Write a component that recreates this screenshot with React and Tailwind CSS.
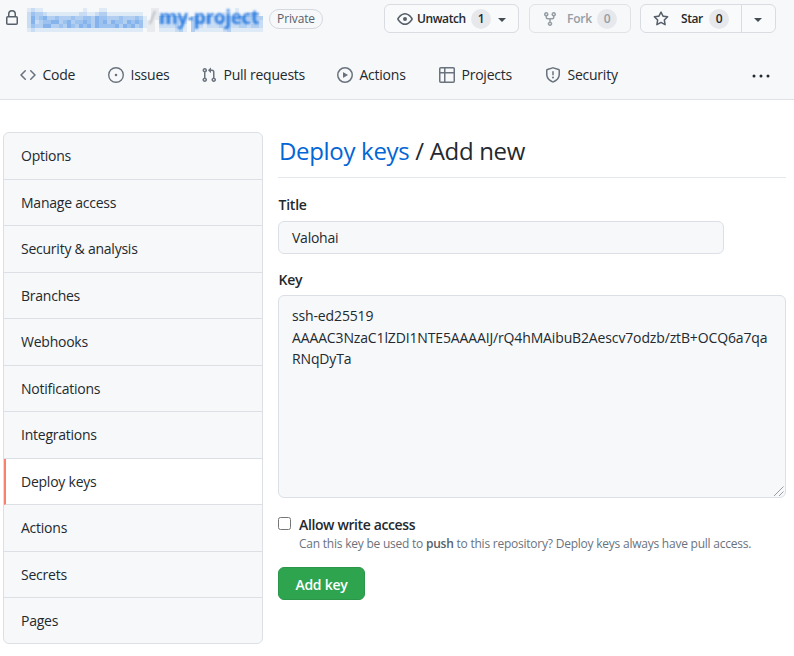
import React from "react";

const ICONS = {
  lock: "M4 4v2h-.25A1.75 1.75 0 002 7.75v5.5c0 .966.784 1.75 1.75 1.75h8.5A1.75 1.75 0 0014 13.25v-5.5A1.75 1.75 0 0012.25 6H12V4a4 4 0 10-8 0zm6.5 2V4a2.5 2.5 0 10-5 0v2h5zM12 7.5h.25a.25.25 0 01.25.25v5.5a.25.25 0 01-.25.25h-8.5a.25.25 0 01-.25-.25v-5.5a.25.25 0 01.25-.25H12z",
  code: "M4.72 3.22a.75.75 0 011.06 1.06L2.06 8l3.72 3.72a.75.75 0 11-1.06 1.06L.47 8.53a.75.75 0 010-1.06l4.25-4.25zm6.56 0a.75.75 0 10-1.06 1.06L13.94 8l-3.72 3.72a.75.75 0 101.06 1.06l4.25-4.25a.75.75 0 000-1.06l-4.25-4.25z",
  issue: "M8 9.3a1.3 1.3 0 100-2.6 1.3 1.3 0 000 2.6zM8 0a8 8 0 100 16A8 8 0 008 0zM1.4 8a6.6 6.6 0 1113.2 0 6.6 6.6 0 01-13.2 0z",
  pull: "M7.177 3.073L9.573.677A.25.25 0 0110 .854v4.792a.25.25 0 01-.427.177L7.177 3.427a.25.25 0 010-.354zM3.75 2.5a.75.75 0 100 1.5.75.75 0 000-1.5zm-2.25.75a2.25 2.25 0 113 2.122v5.256a2.251 2.251 0 11-1.5 0V5.372A2.25 2.25 0 011.5 3.25zM11 2.5h-1V4h1a1 1 0 011 1v5.628a2.251 2.251 0 101.5 0V5A2.5 2.5 0 0011 2.5zm1 10.25a.75.75 0 111.5 0 .75.75 0 01-1.5 0zM3.75 12a.75.75 0 100 1.5.75.75 0 000-1.5z",
  play: "M1.5 8a6.5 6.5 0 1113 0 6.5 6.5 0 01-13 0zM8 0a8 8 0 100 16A8 8 0 008 0zM6.379 5.227A.25.25 0 006 5.442v5.117a.25.25 0 00.379.214l4.264-2.559a.25.25 0 000-.428L6.379 5.227z",
  table: "M0 1.75C0 .784.784 0 1.75 0h12.5C15.216 0 16 .784 16 1.75v12.5A1.75 1.75 0 0114.25 16H1.75A1.75 1.75 0 010 14.25V1.75zM1.5 6.5v7.75c0 .138.112.25.25.25H5v-8H1.5zM6.5 6.5v8h7.75a.25.25 0 00.25-.25V6.5h-8zM14.5 5V1.75a.25.25 0 00-.25-.25H6.5V5h8zm-9.5 0V1.5H1.75a.25.25 0 00-.25.25V5H5z",
  shield: "M7.467.133a1.75 1.75 0 011.066 0l5.25 1.68A1.75 1.75 0 0115 3.48V7c0 1.566-.32 3.182-1.303 4.682-.983 1.498-2.585 2.813-5.032 3.855a1.7 1.7 0 01-1.33 0c-2.447-1.042-4.049-2.357-5.032-3.855C1.32 10.182 1 8.566 1 7V3.48a1.75 1.75 0 011.217-1.667l5.25-1.68zm.61 1.429a.25.25 0 00-.153 0l-5.25 1.68a.25.25 0 00-.174.238V7c0 1.358.275 2.666 1.057 3.86.784 1.194 2.121 2.34 4.366 3.297a.2.2 0 00.154 0c2.245-.956 3.582-2.104 4.366-3.298C13.225 9.666 13.5 8.36 13.5 7V3.48a.25.25 0 00-.174-.237l-5.25-1.68zM9 10.5a1 1 0 11-2 0 1 1 0 012 0zm-.25-5.75a.75.75 0 10-1.5 0v3a.75.75 0 001.5 0v-3z",
  eye: "M1.679 7.932c.412-.621 1.242-1.75 2.366-2.717C5.175 4.242 6.527 3.5 8 3.5c1.473 0 2.824.742 3.955 1.715 1.124.967 1.954 2.096 2.366 2.717a.119.119 0 010 .136c-.412.621-1.242 1.75-2.366 2.717C10.825 11.758 9.473 12.5 8 12.5c-1.473 0-2.824-.742-3.955-1.715C2.92 9.818 2.09 8.69 1.679 8.068a.119.119 0 010-.136zM8 2c-1.981 0-3.67.992-4.933 2.078C1.797 5.169.88 6.423.43 7.1a1.619 1.619 0 000 1.798c.45.678 1.367 1.932 2.637 3.024C4.329 13.008 6.019 14 8 14c1.981 0 3.67-.992 4.933-2.078 1.27-1.091 2.187-2.345 2.637-3.023a1.619 1.619 0 000-1.798c-.45-.678-1.367-1.932-2.637-3.023C11.671 2.992 9.981 2 8 2zm0 8a2 2 0 100-4 2 2 0 000 4z",
  fork: "M5 3.25a.75.75 0 11-1.5 0 .75.75 0 011.5 0zm0 2.122a2.25 2.25 0 10-1.5 0v.878A2.25 2.25 0 005.75 8.5h1.5v2.128a2.251 2.251 0 101.5 0V8.5h1.5a2.25 2.25 0 002.25-2.25v-.878a2.25 2.25 0 10-1.5 0v.878a.75.75 0 01-.75.75h-4.5A.75.75 0 015 6.25v-.878zm3.75 7.378a.75.75 0 11-1.5 0 .75.75 0 011.5 0zm3-8.75a.75.75 0 100-1.5.75.75 0 000 1.5z",
  star: "M8 .25a.75.75 0 01.673.418l1.882 3.815 4.21.612a.75.75 0 01.416 1.279l-3.046 2.97.719 4.192a.75.75 0 01-1.088.791L8 12.347l-3.766 1.98a.75.75 0 01-1.088-.79l.72-4.194L.818 6.374a.75.75 0 01.416-1.28l4.21-.611L7.327.668A.75.75 0 018 .25zm0 2.445L6.615 5.5a.75.75 0 01-.564.41l-3.097.45 2.24 2.184a.75.75 0 01.216.664l-.528 3.084 2.769-1.456a.75.75 0 01.698 0l2.77 1.456-.53-3.084a.75.75 0 01.216-.664l2.24-2.183-3.096-.45a.75.75 0 01-.564-.41L8 2.694v.001z",
};

function Icon({ name, className }) {
  return (
    <svg viewBox="0 0 16 16" className={className} fill="currentColor" fillRule="evenodd" aria-hidden="true">
      <path d={ICONS[name]} />
    </svg>
  );
}

function Caret() {
  return (
    <svg viewBox="0 0 8 4" className="h-[4px] w-[8px] shrink-0 text-[#444d56]" fill="currentColor" aria-hidden="true">
      <path d="M0 0h8L4 4z" />
    </svg>
  );
}

/* Pixelated repository name: one digit of ink per 4px cell. */
const MOSAIC = [
  "121100000000001000110000000000" + "011" + "00000000000000000001000000",
  "243321111111122112331111111110" + "011" + "00000000000000001101001210",
  "253453343334334435443334333431" + "011" + "33323220232232222312333333",
  "252344553453445435453544354541" + "110" + "33323220332232232322332232",
  "243355334354354535444453545341" + "110" + "22223210322122232322332332",
  "121111111111111111111111111110" + "110" + "11112310311111112311111111",
];

function Mosaic() {
  return (
    <svg viewBox="0 0 236 24" className="h-6 w-[236px]" shapeRendering="crispEdges" aria-hidden="true">
      {MOSAIC.map((row, y) =>
        row.split("").map((d, x) => (
          <rect
            key={x + "-" + y}
            x={x * 4}
            y={y * 4}
            width="4"
            height="4"
            fill={x >= 30 && x <= 32 ? "#70757c" : "#0b68dc"}
            opacity={Number(d) / 10.5}
          />
        ))
      )}
    </svg>
  );
}

function Count({ children }) {
  return (
    <span className="flex h-5 w-5 items-center justify-center rounded-full bg-[#e6e8eb] pt-px text-[12px] leading-none">
      {children}
    </span>
  );
}

const TABS = [
  ["code", "Code", "w-[88px]"],
  ["issue", "Issues", "w-[93px]"],
  ["pull", "Pull requests", "w-[136px]"],
  ["play", "Actions", "w-[102px]"],
  ["table", "Projects", "w-[106px]"],
  ["shield", "Security", "w-[90px]"],
];

const MENU = [
  "Options",
  "Manage access",
  "Security & analysis",
  "Branches",
  "Webhooks",
  "Notifications",
  "Integrations",
  "Deploy keys",
  "Actions",
  "Secrets",
  "Pages",
];

export default function App() {
  return (
    <div className="h-[656px] w-[794px] overflow-hidden bg-white font-['Open_Sans','Noto_Sans',sans-serif] text-[14px] tracking-[-0.24px] text-[#24292e]">
      <header className="h-[100px] border-b border-[#dfe2e6] bg-[#f6f8fa]">
        <div className="flex h-[37px] items-center pl-1">
          <Icon name="lock" className="mr-[7px] mt-[-2px] h-4 w-4 shrink-0 text-[#57606a]" />
          <div className="relative w-[236px] shrink-0 pt-[3px]">
            <Mosaic />
            <span className="absolute left-[122px] top-0 text-[19px] leading-6 text-[#70757c] opacity-50 blur-[1px]">/</span>
            <span className="absolute left-[132px] top-0 whitespace-nowrap text-[19px] font-bold leading-6 tracking-[-0.3px] text-[#0b68dc] opacity-80 blur-[0.9px]">
              my-project
            </span>
          </div>
          <span className="ml-[6px] flex h-5 w-[54px] shrink-0 items-center justify-center rounded-full border border-[#d5d9de] text-[12px] font-medium tracking-[-0.15px] text-[#586069]">
            Private
          </span>
          <div className="ml-[61px] flex h-[29px] w-[135px] shrink-0 items-center rounded-md border border-[#d9dce0] bg-[#f9fafb] pl-3 text-[12px] font-semibold tracking-[-0.4px]">
            <Icon name="eye" className="mr-1 h-4 w-4 text-[#57606a]" />
            <span className="w-[54px] pt-px">Unwatch</span>
            <Count>1</Count>
            <span className="ml-[7px] pt-[3px]">
              <Caret />
            </span>
          </div>
          <div className="ml-[10px] flex h-[29px] w-[102px] shrink-0 items-center rounded-md border border-[#e0e3e6] pl-[12px] text-[12px] font-semibold tracking-[-0.2px] text-[#959da5]">
            <Icon name="fork" className="mr-[9px] h-4 w-4" />
            <span className="w-[30px] pt-px">Fork</span>
            <Count>0</Count>
          </div>
          <div className="ml-[9px] flex h-[29px] w-[136px] shrink-0 items-center rounded-md border border-[#d9dce0] bg-[#f9fafb] text-[12px] font-semibold tracking-[-0.4px]">
            <div className="flex h-full w-[101px] items-center border-r border-[#d9dce0] pl-3">
              <Icon name="star" className="mr-3 h-4 w-4 text-[#57606a]" />
              <span className="w-[28px] pt-px">Star</span>
              <Count>0</Count>
            </div>
            <div className="flex flex-1 justify-center pr-px pt-[2px]">
              <Caret />
            </div>
          </div>
        </div>
        <nav className="flex h-[62px] items-center pl-5 pt-[13px]">
          {TABS.map(([icon, label, width]) => (
            <div key={label} className={"flex shrink-0 items-center " + width}>
              <Icon name={icon} className="mr-[6.5px] h-4 w-4 shrink-0 text-[#6a737d]" />
              <span className="whitespace-nowrap pb-px">{label}</span>
            </div>
          ))}
          <svg viewBox="0 0 18 4" className="ml-[117px] mt-[2px] h-1 w-[18px]" fill="currentColor" aria-hidden="true">
            <circle cx="2" cy="2" r="1.5" />
            <circle cx="9" cy="2" r="1.5" />
            <circle cx="16" cy="2" r="1.5" />
          </svg>
        </nav>
      </header>

      <div className="flex pl-[3px] pt-8">
        <aside className="h-[512px] w-[260px] shrink-0 overflow-hidden rounded-md border border-[#dce0e5] bg-[#f6f8fa]">
          {MENU.map((item) => (
            <div
              key={item}
              className={
                "flex h-[46.5px] items-center border-b border-[#dce0e5] " +
                (item === "Deploy keys" ? "border-l-2 border-l-[#f9826c] bg-white pl-[15px]" : "pl-[17px]")
              }
            >
              {item}
            </div>
          ))}
        </aside>

        <main className="ml-[15px] w-[508px]">
          <h1 className="h-[46px] border-b border-[#e4e7eb] pl-px text-[24px] leading-[37px] tracking-[-0.32px]">
            <span className="text-[#0366d6]">Deploy keys</span> / Add new
          </h1>
          <div className="mt-[17px] h-5 pl-[0.5px] font-semibold leading-5">Title</div>
          <div className="mt-[6px] flex h-[33px] w-[446px] items-center rounded-md border border-[#dce0e6] bg-[#f6f8fa] px-[13px]">
            Valohai
          </div>
          <div className="mt-4 h-5 pl-[0.5px] font-semibold leading-5">Key</div>
          <div className="relative mt-[5px] h-[203px] rounded-md border border-[#dce0e6] bg-[#f6f8fa] px-[13px] pt-[9px] leading-[21.5px] tracking-[-0.14px]">
            ssh-ed25519
            <br />
            AAAAC3NzaC1lZDI1NTE5AAAAIJ/rQ4hMAibuB2Aescv7odzb/ztB+OCQ6a7qa
            <br />
            RNqDyTa
            <svg viewBox="0 0 10 10" className="absolute bottom-px right-px h-[10px] w-[10px]" stroke="#8d9299" strokeWidth="0.9" aria-hidden="true">
              <path d="M0 10L9.5 0.5M5 10L9.5 5.5" />
            </svg>
          </div>
          <div className="mt-4 flex">
            <span className="mt-[3px] h-[13px] w-[13px] shrink-0 rounded-[2.5px] border border-[#767676] bg-white" />
            <div className="ml-2">
              <div className="h-5 font-semibold leading-[21px] tracking-[-0.38px]">Allow write access</div>
              <div className="h-5 whitespace-nowrap text-[12px] leading-5 tracking-[-0.23px] text-[#6a737d]">
                Can this key be used to <b className="font-semibold text-[#586069]">push</b> to this repository? Deploy keys always have pull access.
              </div>
            </div>
          </div>
          <button className="mt-[13px] flex h-[33px] w-[87px] items-center justify-center rounded-md border border-[#2a964a] bg-[#2ea44f] pt-px font-semibold text-white">
            Add key
          </button>
        </main>
      </div>
    </div>
  );
}
